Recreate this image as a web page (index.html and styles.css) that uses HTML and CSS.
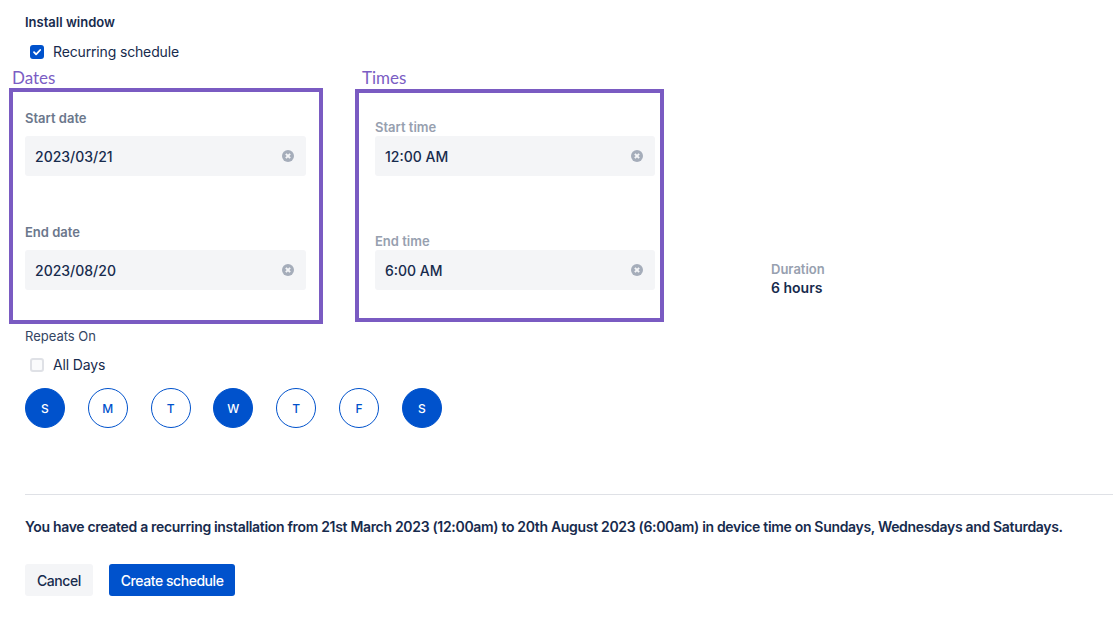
FILE: index.html
```html
<!DOCTYPE html>
<html lang="en">
<head>
    <meta charset="UTF-8">
    <meta name="viewport" content="width=device-width, initial-scale=1.0">
    <title>Install window</title>
    <link rel="stylesheet" href="styles.css">
</head>
<body>
    <div class="page">
        <h4 class="title">Install window</h4>
        <label class="check-row recurring">
            <span class="box checked">
                <svg viewBox="0 0 14 14" width="14" height="14"><path d="M4 7.2l2.1 2.1L10.2 5" fill="none" stroke="#fff" stroke-width="1.8" stroke-linecap="round" stroke-linejoin="round"/></svg>
            </span>
            Recurring schedule
        </label>

        <div class="groups">
            <div class="group dates">
                <div class="group-name">Dates</div>
                <div class="frame">
                    <div class="field">
                        <div class="field-label">Start date</div>
                        <div class="input"><span>2023/03/21</span><span class="clear"></span></div>
                    </div>
                    <div class="field">
                        <div class="field-label">End date</div>
                        <div class="input"><span>2023/08/20</span><span class="clear"></span></div>
                    </div>
                </div>
            </div>
            <div class="group times">
                <div class="group-name">Times</div>
                <div class="frame">
                    <div class="field">
                        <div class="field-label">Start time</div>
                        <div class="input"><span>12:00 AM</span><span class="clear"></span></div>
                    </div>
                    <div class="field">
                        <div class="field-label">End time</div>
                        <div class="input"><span>6:00 AM</span><span class="clear"></span></div>
                    </div>
                </div>
            </div>
            <div class="duration">
                <div class="field-label">Duration</div>
                <div class="duration-value">6 hours</div>
            </div>
        </div>

        <div class="repeats">Repeats On</div>
        <label class="check-row all-days">
            <span class="box"></span>
            All Days
        </label>
        <div class="days">
            <span class="day on">S</span>
            <span class="day">M</span>
            <span class="day">T</span>
            <span class="day on">W</span>
            <span class="day">T</span>
            <span class="day">F</span>
            <span class="day on">S</span>
        </div>

        <hr class="divider">

        <p class="summary">You have created a recurring installation from 21st March 2023 (12:00am) to 20th August 2023 (6:00am) in device time on Sundays, Wednesdays and Saturdays.</p>

        <div class="actions">
            <button class="btn">Cancel</button>
            <button class="btn primary">Create schedule</button>
        </div>
    </div>
</body>
</html>
```

FILE: styles.css
```css
body {
    margin: 0;
    font-family: Inter, "Noto Sans", sans-serif;
    color: #172b4d;
    background: #fff;
}
.page {
    padding: 14px 0 0 25px;
}
.title {
    margin: 0;
    font-size: 13px;
    line-height: 16px;
    font-weight: 600;
}
.check-row {
    display: flex;
    align-items: center;
    gap: 9px;
    font-size: 14px;
    line-height: 20px;
    padding-left: 5px;
    letter-spacing: -0.15px;
}
.recurring {
    margin-top: 12px;
}
.box {
    width: 14px;
    height: 14px;
    box-sizing: border-box;
    border-radius: 3px;
    border: 2px solid #dfe1e6;
    background: #fafbfc;
    display: flex;
}
.box.checked {
    border: none;
    background: #0052cc;
}
.groups {
    display: flex;
    margin-left: -16px;
    margin-top: 6px;
}
.group-name {
    font-family: Lato, sans-serif;
    font-size: 17px;
    line-height: 20px;
    color: #7b5dc4;
    padding-left: 3px;
}
.frame {
    border: 4px solid #7a5bc2;
    box-sizing: border-box;
}
.dates .frame {
    width: 314px;
    padding: 18px 13px 30px 12px;
}
.times {
    margin-left: 32px;
}
.times .group-name {
    padding-left: 7px;
}
.times .frame {
    width: 309px;
    padding: 26px 5px 28px 16px;
    margin-top: 1px;
}
.field-label {
    font-size: 13px;
    line-height: 16px;
    font-weight: 600;
    color: #6b778c;
}
.times .field-label {
    color: #97a0af;
}
.dates .field-label {
    margin-bottom: 10px;
}
.times .field-label {
    margin-bottom: 1px;
}
.dates .field + .field {
    margin-top: 48px;
}
.times .field + .field {
    margin-top: 57px;
}
.input {
    height: 40px;
    background: #f4f5f7;
    border-radius: 3px;
    display: flex;
    align-items: center;
    justify-content: space-between;
    padding: 0 12px 0 10px;
    font-size: 14px;
    font-weight: 500;
}
.clear {
    width: 12px;
    height: 12px;
    border-radius: 50%;
    background: #a5adba;
    position: relative;
}
.clear::before,
.clear::after {
    content: "";
    position: absolute;
    left: 3px;
    top: 5px;
    width: 6px;
    height: 2px;
    background: #f4f5f7;
    transform: rotate(45deg);
}
.clear::after {
    transform: rotate(-45deg);
}
.duration {
    margin-left: 107px;
    margin-top: 193px;
}
.duration .field-label {
    color: #97a0af;
    margin-bottom: 3px;
}
.duration-value {
    font-size: 14px;
    line-height: 16px;
    font-weight: 600;
}
.repeats {
    font-size: 13px;
    line-height: 16px;
    color: #344563;
    margin-top: 4px;
}
.all-days {
    margin-top: 11px;
}
.days {
    display: flex;
    gap: 22.8px;
    margin-top: 13px;
}
.day {
    width: 40px;
    height: 40px;
    box-sizing: border-box;
    border-radius: 50%;
    border: 1.5px solid #0052cc;
    color: #0052cc;
    display: flex;
    align-items: center;
    justify-content: center;
    font-size: 12px;
    font-weight: 500;
}
.day.on {
    background: #0052cc;
    color: #fff;
}
.divider {
    border: none;
    border-top: 1px solid #dfe1e6;
    margin: 66px 0 0;
}
.summary {
    margin: 24px 0 0;
    font-size: 14px;
    line-height: 16px;
    font-weight: 600;
    letter-spacing: -0.32px;
}
.actions {
    display: flex;
    gap: 16px;
    margin-top: 29px;
}
.btn {
    height: 32px;
    padding: 0 12px;
    border: none;
    border-radius: 3px;
    background: #f4f5f7;
    color: #172b4d;
    font-family: inherit;
    font-size: 14px;
    font-weight: 500;
    letter-spacing: -0.45px;
    cursor: pointer;
}
.btn.primary {
    background: #0052cc;
    color: #fff;
}
```
